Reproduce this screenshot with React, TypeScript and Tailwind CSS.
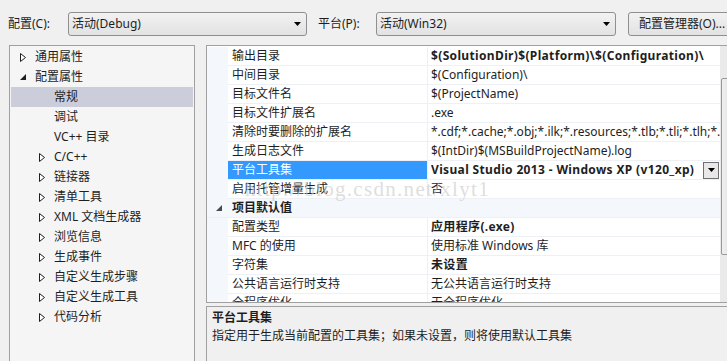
import React from 'react';

// 左侧属性页树
type TreeItem = { label: string; level: 0 | 1; state?: 'open' | 'closed'; selected?: boolean };

const treeItems: TreeItem[] = [
  { label: '通用属性', level: 0, state: 'closed' },
  { label: '配置属性', level: 0, state: 'open' },
  { label: '常规', level: 1, selected: true },
  { label: '调试', level: 1 },
  { label: 'VC++ 目录', level: 1 },
  { label: 'C/C++', level: 1, state: 'closed' },
  { label: '链接器', level: 1, state: 'closed' },
  { label: '清单工具', level: 1, state: 'closed' },
  { label: 'XML 文档生成器', level: 1, state: 'closed' },
  { label: '浏览信息', level: 1, state: 'closed' },
  { label: '生成事件', level: 1, state: 'closed' },
  { label: '自定义生成步骤', level: 1, state: 'closed' },
  { label: '自定义生成工具', level: 1, state: 'closed' },
  { label: '代码分析', level: 1, state: 'closed' },
];

type Prop = { name: string; value: string; bold?: boolean; selected?: boolean; category?: boolean };

const props: Prop[] = [
  { name: '输出目录', value: '$(SolutionDir)$(Platform)\\$(Configuration)\\', bold: true },
  { name: '中间目录', value: '$(Configuration)\\' },
  { name: '目标文件名', value: '$(ProjectName)' },
  { name: '目标文件扩展名', value: '.exe' },
  { name: '清除时要删除的扩展名', value: '*.cdf;*.cache;*.obj;*.ilk;*.resources;*.tlb;*.tli;*.tlh;*.tmp;*.rsp;*.pgc;*.pgd' },
  { name: '生成日志文件', value: '$(IntDir)$(MSBuildProjectName).log' },
  { name: '平台工具集', value: 'Visual Studio 2013 - Windows XP (v120_xp)', bold: true, selected: true },
  { name: '启用托管增量生成', value: '否' },
  { name: '项目默认值', value: '', category: true },
  { name: '配置类型', value: '应用程序(.exe)', bold: true },
  { name: 'MFC 的使用', value: '使用标准 Windows 库' },
  { name: '字符集', value: '未设置', bold: true },
  { name: '公共语言运行时支持', value: '无公共语言运行时支持' },
  { name: '全程序优化', value: '无全程序优化' },
];

function ClosedArrow() {
  return (
    <svg width="6" height="9" viewBox="0 0 6 9">
      <path d="M0.5 0.5 L5.5 4.5 L0.5 8.5 Z" fill="white" stroke="#1e1e1e" strokeWidth="1" />
    </svg>
  );
}

function OpenArrow({ color = '#1e1e1e' }: { color?: string }) {
  return (
    <svg width="6" height="6" viewBox="0 0 6 6">
      <path d="M6 0 L6 6 L0 6 Z" fill={color} />
    </svg>
  );
}

function DropArrow() {
  return (
    <svg width="7" height="4" viewBox="0 0 7 4">
      <path d="M0 0 H7 L3.5 4 Z" fill="#000" />
    </svg>
  );
}

function Combo({ text, width }: { text: string; width: string }) {
  return (
    <div
      className={`${width} h-[24px] shrink-0 flex items-center justify-between pl-[3px] pr-[5px] border border-[#8e8f8f] rounded-[3px] bg-gradient-to-b from-[#f2f2f2] to-[#e2e2e2]`}
    >
      <span>{text}</span>
      <DropArrow />
    </div>
  );
}

export default function App() {
  return (
    <div
      className="w-[727px] h-[361px] overflow-hidden relative bg-[#f0f0f0] text-[12px] text-[#1e1e1e]"
      style={{ fontFamily: '"Noto Sans", "Noto Sans CJK SC", sans-serif' }}
    >
      {/* 顶部配置栏 */}
      <div className="flex items-center h-[45px] pt-[3px] pl-[8px]">
        <span className="w-[60px] shrink-0">配置(C):</span>
        <Combo text="活动(Debug)" width="w-[239px]" />
        <span className="w-[58px] shrink-0 ml-[11px]">平台(P):</span>
        <Combo text="活动(Win32)" width="w-[240px]" />
        <div className="ml-[12px] w-[120px] h-[24px] shrink-0 flex items-center pl-[10px] border border-[#8e8f8f] rounded-[3px] bg-gradient-to-b from-[#f2f2f2] to-[#e2e2e2]">
          配置管理器(O)...
        </div>
      </div>

      <div className="flex pl-[9px]">
        {/* 树 */}
        <div className="w-[186px] h-[330px] shrink-0 border border-[#a0a0a0] bg-[#f5f5f5] pt-[1px]">
          {treeItems.map((item) => (
            <div
              key={item.label}
              className={`flex items-center h-[20px] mx-[1px] ${item.selected ? 'bg-[#cbcdda]' : ''} ${
                item.level === 0 ? 'pl-[9px]' : 'pl-[28px]'
              }`}
            >
              <span className="w-[15px] shrink-0 flex items-center">
                {item.state === 'closed' && <ClosedArrow />}
                {item.state === 'open' && <OpenArrow />}
              </span>
              <span>{item.label}</span>
            </div>
          ))}
        </div>

        <div className="ml-[11px] w-[540px] shrink-0 flex flex-col">
          {/* 属性网格 */}
          <div className="h-[258px] border border-[#a0a0a0] bg-white flex overflow-hidden">
            <div className="w-[513px] shrink-0 flex flex-col pt-[1px]">
              {props.map((p) =>
                p.category ? (
                  <div key={p.name} className="flex items-center h-[19px] bg-[#f4f7fc] border-b border-[#edf0f5]">
                    <span className="w-[21px] shrink-0 flex justify-end pr-[6px]">
                      <OpenArrow color="#4a4a4a" />
                    </span>
                    <span className="pl-[4px] font-bold">{p.name}</span>
                  </div>
                ) : (
                  <div key={p.name} className="flex h-[19px] shrink-0">
                    <div className="w-[21px] shrink-0 bg-[#f4f7fc]" />
                    <div
                      className={`w-[199px] shrink-0 flex items-center pl-[4px] border-b border-[#edf0f5] ${
                        p.selected ? 'bg-[#3399ff] text-white' : ''
                      }`}
                    >
                      {p.name}
                    </div>
                    <div className="w-[293px] shrink-0 flex items-center border-l border-b border-[#edf0f5] pl-[3px] overflow-hidden whitespace-nowrap">
                      <span className={`flex-1 overflow-hidden ${p.bold ? 'font-bold tracking-[0.35px]' : ''}`}>
                        {p.value}
                      </span>
                      {p.selected && (
                        <span className="w-[16px] h-[17px] shrink-0 flex items-center justify-center border border-[#707070] bg-[#e8e8e8] mr-[1px]">
                          <DropArrow />
                        </span>
                      )}
                    </div>
                  </div>
                )
              )}
            </div>
            {/* 滚动条 */}
            <div className="w-[17px] shrink-0 bg-[#eaeaea] flex flex-col items-center">
              <span className="h-[32px] pt-[8px] text-[8px] text-[#606060] leading-none">▴</span>
              <div className="w-[15px] h-[177px] border border-[#979797] rounded-[2px] bg-gradient-to-r from-[#f0f0f0] to-[#dcdcdc]" />
            </div>
          </div>

          {/* 说明 */}
          <div className="mt-[3px] h-[70px] border border-[#a0a0a0] bg-[#f0f0f0] pl-[5px] pt-[2px] leading-[18px]">
            <div className="font-bold">平台工具集</div>
            <div>指定用于生成当前配置的工具集；如果未设置，则将使用默认工具集</div>
          </div>
        </div>
      </div>

      {/* 水印 */}
      <div
        className="absolute left-[245px] top-[179px] text-[21px] leading-[21px] tracking-[1.3px] text-[#cfcfcf]/70 pointer-events-none"
        style={{ fontFamily: '"Liberation Serif", serif' }}
      >
        http://blog.csdn.net/xlyt1
      </div>
    </div>
  );
}
